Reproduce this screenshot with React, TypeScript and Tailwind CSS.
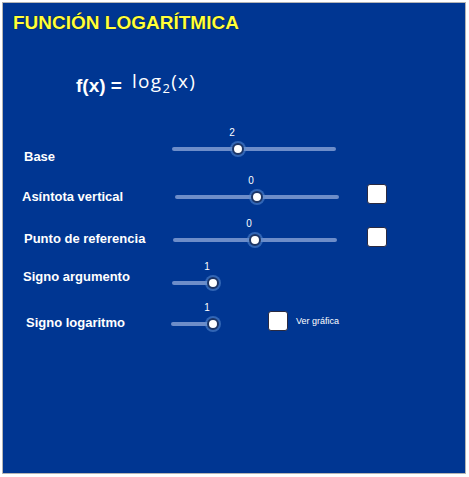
import React from 'react'

const font = { fontFamily: '"Liberation Sans", Arial, sans-serif' }

interface SliderProps {
  width: number
  pos: number
  value: string
}

// trackWidth and thumb position come from data, so they are inline
function Slider({ width, pos, value }: SliderProps) {
  const x = Math.round(width * pos)
  return (
    <div className="relative h-[30px] shrink-0" style={{ width }}>
      <div className="absolute left-0 right-0 top-[20px] h-[4px] rounded-full bg-[#6d8dc9]" />
      <div
        className="absolute top-0 w-[20px] -ml-[16px] text-center text-[10px] leading-[12px] text-white"
        style={{ left: x }}
      >
        {value}
      </div>
      <div
        className="absolute top-[16px] w-[12px] h-[12px] -ml-[6px] rounded-full bg-white border-2 border-[#1c3566] shadow-[0_0_0_2px_rgba(90,140,210,0.55)]"
        style={{ left: x }}
      />
    </div>
  )
}

function Box({ className = '' }: { className?: string }) {
  return <div className={`w-[20px] h-[20px] shrink-0 rounded-[3px] bg-white border border-[#2a2a40] ${className}`} />
}

export default function App() {
  return (
    <div className="w-[469px] h-[477px] bg-white p-[2px]" style={font}>
      <div className="w-[464px] h-[472px] bg-[#003692] border border-[#b4b4b4] flex flex-col">
        {/* Title */}
        <div className="h-[40px] pt-[9px] pl-[10px]">
          <h1 className="text-[19px] leading-[22px] font-bold text-[#ffff3c] [text-shadow:0_0_1px_#000]">
            FUNCIÓN LOGARÍTMICA
          </h1>
        </div>

        {/* Formula */}
        <div className="h-[84px] flex items-start pl-[73px] pt-[29px] text-white">
          <span className="text-[19px] leading-[22px] font-bold mt-[3px]">f(x) =</span>
          <span
            className="ml-[10px] text-[19px] leading-[22px] tracking-[1.3px] -mt-[2px]"
            style={{ fontFamily: '"Open Sans", "DejaVu Sans", sans-serif' }}
          >
            log<sub className="text-[13px] align-[-2px]">2</sub>(x)
          </span>
        </div>

        {/* Controls */}
        <div className="flex flex-col text-white">
          <div className="h-[48px] flex items-start">
            <div className="w-[169px] pl-[21px] mt-[22px] text-[13px] leading-[16px] font-bold">Base</div>
            <Slider width={164} pos={0.4} value="2" />
          </div>

          <div className="h-[43px] flex items-start">
            <div className="w-[172px] pl-[19px] mt-[14px] text-[13px] leading-[16px] font-bold">Asíntota vertical</div>
            <Slider width={164} pos={0.5} value="0" />
            <Box className="ml-[28px] mt-[9px]" />
          </div>

          <div className="h-[43px] flex items-start">
            <div className="w-[170px] pl-[21px] mt-[13px] text-[13px] leading-[16px] font-bold">Punto de referencia</div>
            <Slider width={164} pos={0.5} value="0" />
            <Box className="ml-[30px] mt-[9px]" />
          </div>

          <div className="h-[41px] flex items-start">
            <div className="w-[169px] pl-[20px] mt-[8px] text-[13px] leading-[16px] font-bold">Signo argumento</div>
            <Slider width={41} pos={1} value="1" />
          </div>

          <div className="h-[40px] flex items-start">
            <div className="w-[168px] pl-[23px] mt-[13px] text-[13px] leading-[16px] font-bold">Signo logaritmo</div>
            <Slider width={42} pos={1} value="1" />
            <Box className="ml-[55px] mt-[9px]" />
            <div className="ml-[8px] mt-[13px] text-[9px] leading-[12px]">Ver gráfica</div>
          </div>
        </div>
      </div>
    </div>
  )
}
